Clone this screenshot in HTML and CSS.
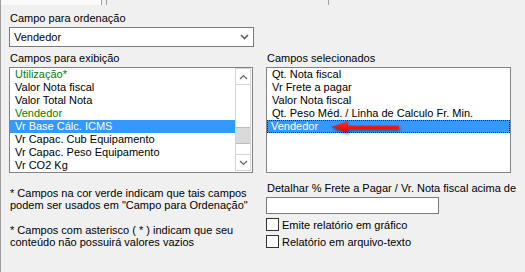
FILE: index.html
```html
<!DOCTYPE html>
<html lang="pt">
<head>
  <meta charset="UTF-8">
  <title>Campos do relatório</title>
  <link rel="stylesheet" href="styles.css">
</head>
<body>

  <!-- abas (só a parte de baixo aparece) -->
  <div class="tabs">
    <div class="tab tab-active"></div>
    <div class="tab tab-second"></div>
    <div class="tab tab-third"></div>
  </div>

  <div class="page">
    <div class="caption caption-top">Campo para ordenação</div>
    <div class="combo">
      <span>Vendedor</span>
      <svg class="combo-arrow" width="9" height="6" viewBox="0 0 9 6">
        <polyline points="1,1 4.5,4.5 8,1" fill="none" stroke="#5c5c5c" stroke-width="1.6"/>
      </svg>
    </div>

    <div class="columns">
      <div class="col">
        <div class="caption">Campos para exibição</div>
        <div class="listbox">
          <ul class="items">
            <li class="green">Utilização*</li>
            <li>Valor Nota fiscal</li>
            <li>Valor Total Nota</li>
            <li class="green">Vendedor</li>
            <li class="selected">Vr Base Cálc. ICMS</li>
            <li>Vr Capac. Cub Equipamento</li>
            <li>Vr Capac. Peso Equipamento</li>
            <li>Vr CO2 Kg</li>
          </ul>
          <div class="scrollbar">
            <div class="sb-btn">
              <svg width="9" height="6" viewBox="0 0 9 6"><polyline points="1,5 4.5,1.5 8,5" fill="none" stroke="#606060" stroke-width="1.2"/></svg>
            </div>
            <div class="sb-track"><div class="sb-thumb"></div></div>
            <div class="sb-btn">
              <svg width="9" height="6" viewBox="0 0 9 6"><polyline points="1,1 4.5,4.5 8,1" fill="none" stroke="#606060" stroke-width="1.2"/></svg>
            </div>
          </div>
        </div>
        <p class="note">* Campos na cor verde indicam que tais campos podem ser usados em "Campo para Ordenação"</p>
        <p class="note">* Campos com asterisco ( * ) indicam que seu conteúdo não possuirá valores vazios</p>
      </div>

      <div class="col">
        <div class="caption">Campos selecionados</div>
        <div class="listbox listbox-right">
          <ul class="items">
            <li>Qt. Nota fiscal</li>
            <li>Vr Frete a pagar</li>
            <li>Valor Nota fiscal</li>
            <li>Qt. Peso Méd. / Linha de Calculo Fr. Min.</li>
            <li class="selected focused">Vendedor</li>
          </ul>
          <!-- seta vermelha desenhada por cima -->
          <svg class="pointer" width="80" height="20" viewBox="0 0 80 20">
            <defs>
              <linearGradient id="red" x1="0" y1="0" x2="0" y2="1">
                <stop offset="0" stop-color="#ff3030"/>
                <stop offset="1" stop-color="#d40000"/>
              </linearGradient>
              <filter id="shadow" x="-20%" y="-50%" width="140%" height="200%">
                <feDropShadow dx="1" dy="2" stdDeviation="1.5" flood-color="#000" flood-opacity="0.45"/>
              </filter>
            </defs>
            <path d="M2 8 L19 2 L19 6.5 L70 6.5 L70 10 L19 10 L19 14 Z" fill="url(#red)" filter="url(#shadow)"/>
          </svg>
        </div>

        <div class="caption detail">Detalhar % Frete a Pagar / Vr. Nota fiscal acima de</div>
        <div class="textbox"></div>
        <label class="check"><span class="box"></span>Emite relatório em gráfico</label>
        <label class="check"><span class="box"></span>Relatório em arquivo-texto</label>
      </div>
    </div>
  </div>

</body>
</html>
```

FILE: styles.css
```css
body {
  margin: 0;
  width: 525px;
  height: 272px;
  overflow: hidden;
  background: #f0f0f0;
  font-family: "Liberation Sans", Arial, sans-serif;
  font-size: 11px;
  color: #000;
}

/* faixa das abas */
.tabs {
  height: 5px;
  display: flex;
}

.tab {
  height: 5px;
  box-sizing: border-box;
}

.tab-active {
  width: 102px;
  background: #fafafa;
  border-left: 1px solid #a0a0a0;
  border-right: 1px solid #a0a0a0;
}

.tab-second {
  width: 222px;
  margin-left: 4px;
  border-left: 1px solid #a0a0a0;
}

.tab-third {
  width: 92px;
  border-left: 1px solid #a0a0a0;
}

.page {
  height: 267px;
  box-sizing: border-box;
  border-left: 1px solid #a0a0a0;
  padding-left: 8px;
}

.caption {
  height: 13px;
  line-height: 13px;
  white-space: nowrap;
}

.caption-top {
  padding-top: 7px;
  padding-left: 1px;
}

.combo {
  margin-top: 2px;
  width: 245px;
  height: 20px;
  box-sizing: border-box;
  border: 1px solid #7a7a7a;
  background: #fff;
  display: flex;
  align-items: center;
  justify-content: space-between;
  padding: 0 4px 0 4px;
}

.combo-arrow {
  margin-right: 0;
}

.columns {
  display: grid;
  grid-template-columns: 244px 245px;
  column-gap: 13px;
  margin-top: 5px;
}

.col .caption {
  padding-left: 1px;
}

.listbox {
  position: relative;
  margin-top: 2px;
  height: 106px;
  box-sizing: border-box;
  border: 1px solid #828282;
  background: #fff;
  display: flex;
}

.items {
  list-style: none;
  margin: 0;
  padding: 0;
  flex: 1;
}

.items li {
  height: 13px;
  line-height: 13px;
  padding-left: 5px;
  white-space: nowrap;
}

.items li.green {
  color: #008000;
}

.items li.selected {
  background: #3399ff;
  color: #fff;
}

.items li.focused {
  outline: 1px dotted #222;
  outline-offset: -1px;
  padding-left: 4px;
}

.listbox-right .items {
  padding-top: 0;
}

/* barra de rolagem desenhada */
.scrollbar {
  width: 17px;
  display: flex;
  flex-direction: column;
  padding: 0 1px 1px 0;
  box-sizing: border-box;
}

.sb-btn {
  height: 17px;
  box-sizing: border-box;
  border: 1px solid #d4d4d4;
  background: #fff;
  display: flex;
  align-items: center;
  justify-content: center;
}

.sb-track {
  flex: 1;
  box-sizing: border-box;
  border-left: 1px solid #d4d4d4;
  border-right: 1px solid #d4d4d4;
  background: #fff;
}

.sb-thumb {
  margin-top: 42px;
  height: 17px;
  box-sizing: border-box;
  border-top: 1px solid #bcbcbc;
  border-bottom: 1px solid #bcbcbc;
  background: #dadada;
}

.pointer {
  position: absolute;
  left: 62px;
  top: 51px;
}

.note {
  margin: 14px 0 0 1px;
  line-height: 12px;
  width: 240px;
}

.note + .note {
  margin-top: 13px;
}

.detail {
  margin-top: 9px;
}

.textbox {
  margin-top: 2px;
  width: 173px;
  height: 17px;
  box-sizing: border-box;
  border: 1px solid #7a7a7a;
  background: #fff;
}

.check {
  display: flex;
  align-items: center;
  height: 13px;
  margin-top: 4px;
}

.check .box {
  width: 13px;
  height: 13px;
  box-sizing: border-box;
  border: 1px solid #333;
  background: #fff;
  margin-right: 3px;
}
```
